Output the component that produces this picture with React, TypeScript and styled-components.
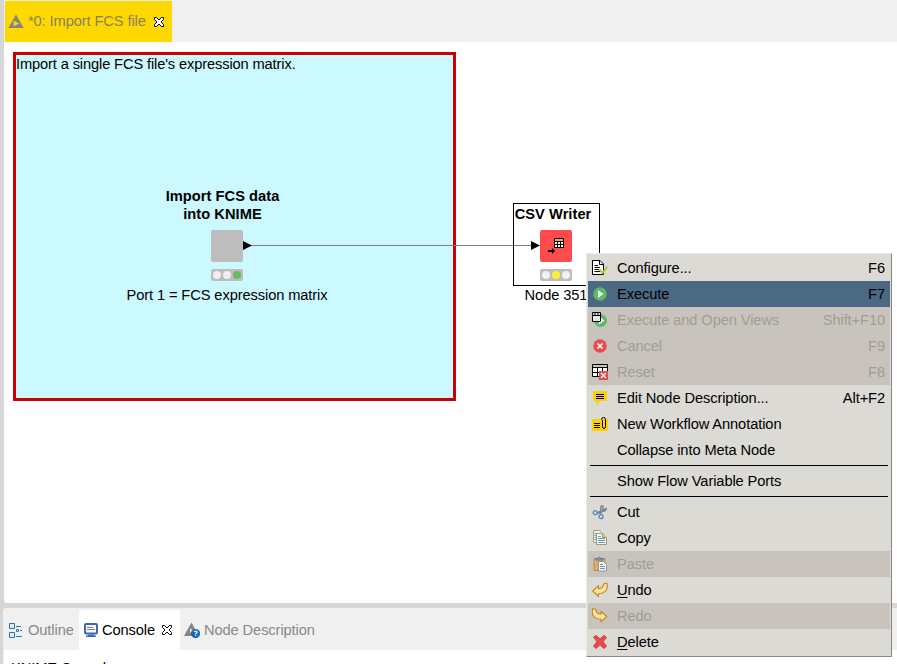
import React from 'react';
import styled, { createGlobalStyle, css } from 'styled-components';

const GlobalStyle = createGlobalStyle`
  * { box-sizing: border-box; }
  body {
    margin: 0;
    background: #d6d6d6;
    color: #000;
    font: 14.67px/18px "Liberation Sans", Arial, sans-serif;
    letter-spacing: -0.1px;
    overflow: hidden;
  }
  svg { display: block; flex: none; }
`;

const Workbench = styled.div`
  position: relative;
  width: 897px;
  height: 664px;
  display: flex;
  flex-direction: column;
  gap: 5px;
  overflow: hidden;
`;

const EditorPane = styled.section`
  height: 603px;
  margin-left: 4px;
  display: flex;
  flex-direction: column;
  border-bottom-left-radius: 3px;
  overflow: hidden;
`;

const EditorTabs = styled.div`
  height: 42px;
  flex: none;
  padding: 1px 0 0 1px;
  background: #f0f0f0;
`;

const EditorTab = styled.div`
  width: 167px;
  height: 41px;
  display: flex;
  align-items: center;
  padding-left: 3px;
  background: #ffd800;
  color: #88825c;
  white-space: nowrap;
`;

const TabLabel = styled.span<{ $gap: number; $width: number; $lift?: number }>`
  width: ${(p) => p.$width}px;
  margin-left: ${(p) => p.$gap}px;
  margin-top: -${(p) => p.$lift ?? 0}px;
  white-space: nowrap;
`;

const Canvas = styled.div`
  position: relative;
  flex: 1;
  background: #fff;
`;

const Annotation = styled.div`
  position: absolute;
  left: 9px;
  top: 10px;
  width: 443px;
  height: 349px;
  border: 3px solid #cc0000;
  background: #ccf8ff;
  letter-spacing: -0.13px;
  white-space: nowrap;
`;

const Wire = styled.div`
  position: absolute;
  left: 247px;
  top: 203px;
  width: 282px;
  height: 1px;
  background: #808080;
`;

const NodeFigure = styled.div<{ $x: number; $y: number; $w: number }>`
  position: absolute;
  left: ${(p) => p.$x}px;
  top: ${(p) => p.$y}px;
  width: ${(p) => p.$w}px;
  display: flex;
  flex-direction: column;
  align-items: center;
  text-align: center;
  white-space: nowrap;
`;

const NodeTitle = styled.div<{ $shift: number }>`
  margin-right: ${(p) => p.$shift}px;
  font-weight: bold;
  letter-spacing: 0.03px;
`;

const NodeBody = styled.div<{ $color: string }>`
  width: 32px;
  height: 32px;
  margin-top: 7px;
  border-radius: 2px;
  background: ${(p) => p.$color};
`;

const TrafficLight = styled.div`
  width: 32px;
  height: 12px;
  margin-top: 7px;
  padding: 0 2px;
  display: flex;
  align-items: center;
  justify-content: space-between;
  border-radius: 2px;
  background: #bdbdbd;
`;

const Lamp = styled.span<{ $color?: string }>`
  width: 8px;
  height: 8px;
  border-radius: 50%;
  background: ${(p) => p.$color ?? '#f0f0f0'};
`;

const NodeCaption = styled.div`
  margin-top: 5px;
`;

const Selection = styled.div`
  position: absolute;
  left: 509px;
  top: 161px;
  width: 87px;
  height: 83px;
  border: 1px solid #000;
`;

const Port = styled.svg<{ $x: number }>`
  position: absolute;
  left: ${(p) => p.$x}px;
  top: 199px;
`;

const BottomPane = styled.section`
  flex: 1;
  margin-left: 3px;
  display: flex;
  flex-direction: column;
  border-top-left-radius: 3px;
  background: #f0f0f0;
  overflow: hidden;
`;

const ViewTabs = styled.div`
  height: 42px;
  flex: none;
  display: flex;
  padding: 2px 0 0 1px;
`;

const ViewTab = styled.div<{ $width: number; $active?: boolean }>`
  width: ${(p) => p.$width}px;
  height: 40px;
  display: flex;
  align-items: center;
  padding-left: 4px;
  white-space: nowrap;
  color: ${(p) => (p.$active ? '#000' : '#888')};
  background: ${(p) => (p.$active ? '#fff' : 'transparent')};
`;

const ViewContent = styled.div`
  flex: 1;
  margin-left: 1px;
  padding: 9px 0 0 7px;
  background: #fff;
  white-space: nowrap;
`;

const Menu = styled.div`
  position: absolute;
  left: 586px;
  top: 253px;
  width: 306px;
  height: 404px;
  padding: 1px;
  border: 1px solid;
  border-color: #eceae5 #8a867b #8a867b #eceae5;
  background: #dcdad5;
`;

const MenuRow = styled.div<{ $state?: 'selected' | 'disabled' }>`
  height: 26px;
  display: grid;
  grid-template-columns: 29px 1fr auto;
  align-items: center;
  padding: 0 5px 0 0;
  white-space: nowrap;
  ${(p) => p.$state === 'selected' && css`background: #4b6983;`}
  ${(p) => p.$state === 'disabled' && css`background: #c8c4bd; color: #a19d95;`}
`;

const MenuIcon = styled.span`
  padding-left: 4px;
`;

const Divider = styled.div`
  height: 5px;
  padding: 2px 0;
  margin: 0 2px;
  &::before {
    content: "";
    display: block;
    height: 1px;
    background: #000;
  }
`;

const Mnemonic = styled.span`
  text-decoration: underline;
  text-decoration-thickness: 1px;
  text-underline-offset: 2px;
`;

const Icon = ({ children, size = 16 }: { children: React.ReactNode; size?: number }) => (
  <svg width={size} height={size} viewBox={`0 0 ${size} ${size}`} fill="none">{children}</svg>
);

const CloseIcon = () => (
  <svg width="12" height="12" viewBox="0 0 12 12">
    <path d="M1.5 1.5H3.5L6 4L8.5 1.5H10.5V3.5L8 6L10.5 8.5V10.5H8.5L6 8L3.5 10.5H1.5V8.5L4 6L1.5 3.5Z" fill="#fff" stroke="#000" strokeWidth="1" />
  </svg>
);

const KnimeIcon = () => (
  <Icon><path fillRule="evenodd" d="M8 .5L15.7 14H.3ZM5.6 6.4V12.2L11.3 9.4Z" fill="#858585" /></Icon>
);

const ConfigureIcon = () => (
  <Icon>
    <path d="M.5 .5H8L11.5 4V14.5H.5Z" fill="#fff" stroke="#000" />
    <path d="M7.5 1V4.5H11M2.5 5.5H6M2.5 7.5H8M2.5 9.5H7M2.5 11.5H8" stroke="#000" />
    <path d="M7.5 9.5L10.5 13L15.3 6.5" stroke="#b4c832" strokeWidth="2" />
  </Icon>
);

const ExecuteIcon = () => (
  <Icon><circle cx="8" cy="8" r="6.8" fill="#5bb967" /><path d="M6 4.3L11.5 8L6 11.7Z" fill="#fff" /></Icon>
);

const ExecuteViewIcon = () => (
  <Icon>
    <circle cx="8.5" cy="8.5" r="6.5" fill="#5bb967" />
    <path d="M7 4.5V12.5L12.5 8.5Z" fill="#fff" />
    <path d="M.5 .5H8.5V9.5H.5Z" fill="#e8e6e2" stroke="#000" />
    <path d="M1 3.5H8M2 2H4M5 2H7" stroke="#000" />
  </Icon>
);

const CancelIcon = () => (
  <Icon><circle cx="8" cy="8" r="6.8" fill="#ea4c51" /><path d="M5.5 5.5L10.5 10.5M10.5 5.5L5.5 10.5" stroke="#fff" strokeWidth="1.6" /></Icon>
);

const ResetIcon = () => (
  <Icon>
    <path d="M.5 .5H15.5V12.5H.5Z" fill="#fff" stroke="#000" />
    <path d="M1 1H15V3H1Z" fill="#c8c4bd" />
    <path d="M0 3.5H16M0 8.5H16M5.5 3V13M10.5 3V13" stroke="#000" />
    <path d="M7 7H16V16H7Z" fill="#e5484d" />
    <path d="M9 9L14 14M14 9L9 14" stroke="#fff" strokeWidth="1.2" />
  </Icon>
);

const DescriptionIcon = () => (
  <Icon><path d="M2 1H14Q15 1 15 2V10Q15 11 14 11H8L5 15L4 11H2Q1 11 1 10V2Q1 1 2 1Z" fill="#ffcc0c" /><path d="M4 4.5H12M4 6.5H12M4 8.5H12" stroke="#000" /></Icon>
);

const AnnotationIcon = () => (
  <Icon>
    <rect y="3" width="16" height="12" rx="1" fill="#ffcc0c" />
    <path d="M2 7.5H8M2 9.5H8M2 11.5H8M10.5 4V10.5Q10.5 12.5 12 12.5Q13.5 12.5 13.5 10.5V3.5Q13.5 1.5 11.5 1.5Q9.5 1.5 9.5 3.5" stroke="#000" />
  </Icon>
);

const CutIcon = () => (
  <Icon>
    <path d="M5 8.5L14.5 4L14 6.5L6 9.5Z" fill="#8a9299" stroke="#68747c" strokeWidth=".8" />
    <path d="M8 10.5L9 1.5L11.5 2L10 8Z" fill="#a7adb0" stroke="#68747c" strokeWidth=".8" />
    <circle cx="3.2" cy="8.7" r="2" stroke="#4f84bd" strokeWidth="1.2" />
    <circle cx="9" cy="12.7" r="2" stroke="#4f84bd" strokeWidth="1.2" />
  </Icon>
);

const CopyIcon = () => (
  <Icon>
    <path d="M1.5 .5H7.5L9.5 2.5V12.5H1.5Z" fill="#e4f0f4" stroke="#a9a471" />
    <path d="M2.5 3.5H5M2.5 5.5H5M2.5 7.5H5M2.5 9.5H5" stroke="#6b9fc9" />
    <path d="M4.5 3.5H10.5L14.5 7.5V14.5H4.5Z" fill="#f7fafb" stroke="#a29b68" />
    <path d="M10.5 3.5V7.5H14.5" fill="#d8c57a" stroke="#a29b68" />
    <path d="M6 6.5H9M6 8.5H13M6 10.5H13M6 12.5H13" stroke="#6798c4" />
  </Icon>
);

const PasteIcon = () => (
  <Icon>
    <path d="M2 2.5H13V14.5H2Z" fill="#dfad65" stroke="#bd8c49" />
    <path d="M4 4V2.5H6Q7.5 -.3 9 2.5H11V4Z" fill="#8fa1b7" stroke="#617694" />
    <path d="M6.5 5.5H11.5L14.5 8.5V15H6.5Z" fill="#eef5f8" stroke="#929789" />
    <path d="M8 8.5H11M8 10.5H13M8 12.5H13" stroke="#6f97bd" />
  </Icon>
);

const TurnIcon = ({ redo }: { redo?: boolean }) => (
  <Icon>
    <path transform={redo ? 'translate(15.5 -.5) scale(-1 1)' : undefined} d="M.8 9L6.5 3.6V6.6Q11.2 6.5 11.8 1.8L15 1.3Q17 11 6.5 11.7V14.4Z" fill="#ffe29a" stroke="#bd841f" strokeWidth="1.1" strokeLinejoin="round" />
  </Icon>
);

const DeleteIcon = () => (
  <Icon>
    <path d="M1.5 3L4.3 1.5L8 5L12 1.5L14.5 3.5L11 7.7L14.5 12.3L11.8 14.5L8 10.7L4.2 14.5L1.5 12.2L5 7.7Z" fill="#ed4c4c" stroke="#c83b3b" strokeLinejoin="round" />
  </Icon>
);

const OutlineIcon = () => (
  <Icon>
    <path d="M1.5 1.5H6.5V6.5H1.5ZM1.5 10.5H6.5V15.5H1.5Z" fill="#d8eef9" stroke="#2a76b4" />
    <path d="M8 4.5H13M12 8.5H14M8 14.5H14" stroke="#2a76b4" />
    <path d="M8.5 7.5H10.5V9.5H8.5Z" fill="#fff" stroke="#2a76b4" />
  </Icon>
);

const ConsoleIcon = () => (
  <Icon>
    <rect x="2" y="2" width="12" height="9.5" rx="1" fill="#f5f8ff" stroke="#3f68b0" strokeWidth="2" />
    <path d="M4 5.5H10M4 7.5H12" stroke="#6e83a8" />
    <path d="M5 12.5H11V13.5H13V15H3V13.5H5Z" fill="#3f68b0" />
  </Icon>
);

const NodeHelpIcon = () => (
  <Icon>
    <path d="M7.5 .5L15 14H0Z" fill="#858585" />
    <path d="M6 6.5V11L9.5 8.5Z" fill="#efefef" />
    <circle cx="11.5" cy="11.5" r="4.6" fill="#1669b2" />
    <path d="M10 10.2Q10.3 9 11.7 9Q13.2 9 13.1 10.3Q13 11 11.7 11.5V12.2M11.7 13V14" stroke="#fff" strokeWidth="1.2" />
  </Icon>
);

const CsvIcon = () => (
  <Icon size={32}>
    <path d="M14 8H24V18H14Z" fill="#000" />
    <path d="M15 9H23V11H15Z" fill="#ffa43b" />
    <path d="M15 12H17V14H15ZM18 12H20V14H18ZM21 12H23V14H21ZM15 15H17V17H15ZM18 15H20V17H18ZM21 15H23V17H21Z" fill="#fff" />
    <path d="M8 21H13" stroke="#000" strokeWidth="2" />
    <path d="M12 18V24L15 21Z" fill="#000" />
  </Icon>
);

type Entry = {
  label?: React.ReactNode;
  keys?: string;
  icon?: React.ReactNode;
  state?: 'selected' | 'disabled';
};

const entries: Entry[] = [
  { label: 'Configure...', keys: 'F6', icon: <ConfigureIcon /> },
  { label: 'Execute', keys: 'F7', icon: <ExecuteIcon />, state: 'selected' },
  { label: 'Execute and Open Views', keys: 'Shift+F10', icon: <ExecuteViewIcon />, state: 'disabled' },
  { label: 'Cancel', keys: 'F9', icon: <CancelIcon />, state: 'disabled' },
  { label: 'Reset', keys: 'F8', icon: <ResetIcon />, state: 'disabled' },
  { label: 'Edit Node Description...', keys: 'Alt+F2', icon: <DescriptionIcon /> },
  { label: 'New Workflow Annotation', icon: <AnnotationIcon /> },
  { label: 'Collapse into Meta Node' },
  {},
  { label: 'Show Flow Variable Ports' },
  {},
  { label: 'Cut', icon: <CutIcon /> },
  { label: 'Copy', icon: <CopyIcon /> },
  { label: 'Paste', icon: <PasteIcon />, state: 'disabled' },
  { label: <><Mnemonic>U</Mnemonic>ndo</>, icon: <TurnIcon /> },
  { label: 'Redo', icon: <TurnIcon redo />, state: 'disabled' },
  { label: <><Mnemonic>D</Mnemonic>elete</>, icon: <DeleteIcon /> },
];

const PortArrow = ({ x }: { x: number }) => (
  <Port $x={x} width="9" height="9" viewBox="0 0 9 9"><path d="M0 0L9 4.5L0 9Z" fill="#000" /></Port>
);

export default function App() {
  return (
    <>
      <GlobalStyle />
      <Workbench>
        <EditorPane>
          <EditorTabs>
            <EditorTab>
              <KnimeIcon />
              <TabLabel $gap={4} $width={125} $lift={2}>*0: Import FCS file</TabLabel>
              <CloseIcon />
            </EditorTab>
          </EditorTabs>
          <Canvas>
            <Annotation>Import a single FCS file's expression matrix.</Annotation>
            <Wire />
            <NodeFigure $x={103} $y={145} $w={240}>
              <NodeTitle $shift={9}>Import FCS data<br />into KNIME</NodeTitle>
              <NodeBody $color="#bdbdbd" />
              <TrafficLight><Lamp /><Lamp /><Lamp $color="#64bd5c" /></TrafficLight>
              <NodeCaption>Port 1 = FCS expression matrix</NodeCaption>
            </NodeFigure>
            <PortArrow x={239} />
            <Selection />
            <NodeFigure $x={509} $y={163} $w={86}>
              <NodeTitle $shift={6}>CSV Writer</NodeTitle>
              <NodeBody $color="#ff4b4b"><CsvIcon /></NodeBody>
              <TrafficLight><Lamp /><Lamp $color="#fff02d" /><Lamp /></TrafficLight>
              <NodeCaption>Node 351</NodeCaption>
            </NodeFigure>
            <PortArrow x={527} />
          </Canvas>
        </EditorPane>
        <BottomPane>
          <ViewTabs>
            <ViewTab $width={75}><OutlineIcon /><TabLabel $gap={4} $width={50}>Outline</TabLabel></ViewTab>
            <ViewTab $width={101} $active><ConsoleIcon /><TabLabel $gap={3} $width={59}>Console</TabLabel><CloseIcon /></ViewTab>
            <ViewTab $width={150}><NodeHelpIcon /><TabLabel $gap={4} $width={115}>Node Description</TabLabel></ViewTab>
          </ViewTabs>
          <ViewContent>KNIME Console</ViewContent>
        </BottomPane>
        <Menu>
          {entries.map((entry, i) => entry.label ? (
            <MenuRow key={i} $state={entry.state}>
              <MenuIcon>{entry.icon}</MenuIcon>
              <span>{entry.label}</span>
              <span>{entry.keys}</span>
            </MenuRow>
          ) : <Divider key={i} />)}
        </Menu>
      </Workbench>
    </>
  );
}
